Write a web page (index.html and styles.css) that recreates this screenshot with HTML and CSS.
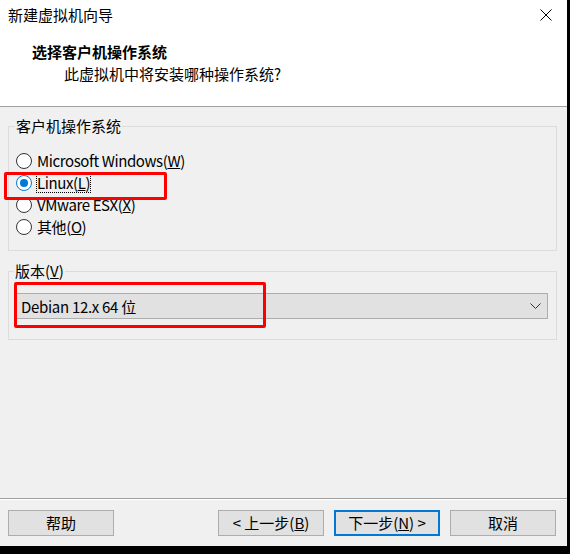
FILE: index.html
```html
<!DOCTYPE html>
<html lang="zh-CN">
<head>
    <meta charset="UTF-8">
    <meta name="viewport" content="width=device-width, initial-scale=1.0">
    <title>新建虚拟机向导</title>
    <link rel="stylesheet" href="styles.css">
</head>
<body>
    <div class="window">
        <div class="titlebar">
            <span class="title">新建虚拟机向导</span>
            <svg class="close" width="12" height="12" viewBox="0 0 12 12">
                <path d="M0.5 0.5 L11.5 11.5 M11.5 0.5 L0.5 11.5" stroke="#000" stroke-width="1" fill="none"/>
            </svg>
        </div>
        <div class="header">
            <div class="heading">选择客户机操作系统</div>
            <div class="subheading">此虚拟机中将安装哪种操作系统?</div>
        </div>

        <div class="content">
            <fieldset class="group group-os">
                <legend>客户机操作系统</legend>
                <div class="radio"><span class="circle"></span><span class="label">Microsoft Windows(<u>W</u>)</span></div>
                <div class="radio checked"><span class="circle"></span><span class="label focus">Linux(<u>L</u>)</span></div>
                <div class="radio"><span class="circle"></span><span class="label">VMware ESX(<u>X</u>)</span></div>
                <div class="radio"><span class="circle"></span><span class="label">其他(<u>O</u>)</span></div>
            </fieldset>

            <fieldset class="group group-version">
                <legend>版本(<u>V</u>)</legend>
                <div class="select">
                    <span class="value">Debian 12.x 64 位</span>
                    <svg class="chevron" width="11" height="6" viewBox="0 0 11 6">
                        <path d="M0.5 0.5 L5.5 5.5 L10.5 0.5" stroke="#333" stroke-width="1" fill="none"/>
                    </svg>
                </div>
            </fieldset>

            <!-- red annotation boxes -->
            <div class="mark mark-os"></div>
            <div class="mark mark-version"></div>
        </div>

        <div class="footer">
            <button class="btn">帮助</button>
            <button class="btn btn-back">&lt; 上一步(<u>B</u>)</button>
            <button class="btn btn-default">下一步(<u>N</u>) &gt;</button>
            <button class="btn">取消</button>
        </div>
    </div>
</body>
</html>
```

FILE: styles.css
```css
body {
    margin: 0;
    background: #000;
    font-family: "Noto Sans CJK SC", "Noto Sans", sans-serif;
    font-size: 15px;
    color: #000;
}

.window {
    position: relative;
    width: 567px;
    height: 546px;
    background: #f0f0f0;
    display: flex;
    flex-direction: column;
}

.titlebar {
    height: 30px;
    background: #fff;
    display: flex;
    align-items: center;
    justify-content: space-between;
    padding: 0 15px 0 8px;
}

.title {
    line-height: 20px;
}

.close {
    display: block;
}

.header {
    height: 77px;
    box-sizing: border-box;
    background: #fff;
    border-bottom: 1px solid #a0a0a0;
    padding-top: 11px;
}

.heading {
    font-weight: bold;
    line-height: 22px;
    padding-left: 32px;
}

.subheading {
    line-height: 22px;
    padding-left: 64px;
}

.content {
    flex: 1;
    border-bottom: 1px solid #a0a0a0;
    box-shadow: 0 1px 0 #fff;
    padding-top: 9px;
}

.group {
    margin: 0 10px 0 8px;
    border: 1px solid #dcdcdc;
    min-inline-size: 0;
}

.group legend {
    padding: 0 1px;
    line-height: 20px;
}

.group-os {
    padding: 14px 8px 12px 6px;
}

.group-version {
    margin-top: 10px;
    padding: 12px 8px 20px 5px;
}

.radio {
    display: flex;
    align-items: center;
    height: 22px;
}

.circle {
    width: 16px;
    height: 16px;
    box-sizing: border-box;
    border: 1px solid #333;
    border-radius: 50%;
    background: #fff;
    margin: 0 5px 0 1px;
    display: flex;
    align-items: center;
    justify-content: center;
}

.radio.checked .circle {
    border-color: #0078d7;
}

.radio.checked .circle::after {
    content: "";
    width: 8px;
    height: 8px;
    border-radius: 50%;
    background: #0078d7;
}

.label {
    line-height: 20px;
    letter-spacing: -0.4px;
}

.label.focus {
    outline: 1px dotted #000;
    outline-offset: -1px;
    padding: 0 1px;
    margin-left: -1px;
}

.select {
    height: 26px;
    box-sizing: border-box;
    border: 1px solid #adadad;
    background: #e1e1e1;
    display: flex;
    align-items: center;
    justify-content: space-between;
    padding: 0 6px;
}

.value {
    letter-spacing: -0.3px;
}

.chevron {
    display: block;
}

.mark {
    position: absolute;
    border: 3px solid #ff0000;
    border-radius: 2px;
    box-sizing: border-box;
}

.mark-os {
    left: 4px;
    top: 172px;
    width: 163px;
    height: 28px;
}

.mark-version {
    left: 14px;
    top: 282px;
    width: 252px;
    height: 46px;
}

.footer {
    display: flex;
    gap: 10px;
    padding: 11px 11px 10px 8px;
}

.btn {
    width: 106px;
    height: 26px;
    box-sizing: border-box;
    border: 1px solid #adadad;
    background: #e1e1e1;
    font-family: inherit;
    font-size: 15px;
    color: #000;
    padding: 0;
    line-height: 22px;
}

.btn-back {
    margin-left: auto;
}

.btn-default {
    border: 2px solid #0078d7;
}
```
